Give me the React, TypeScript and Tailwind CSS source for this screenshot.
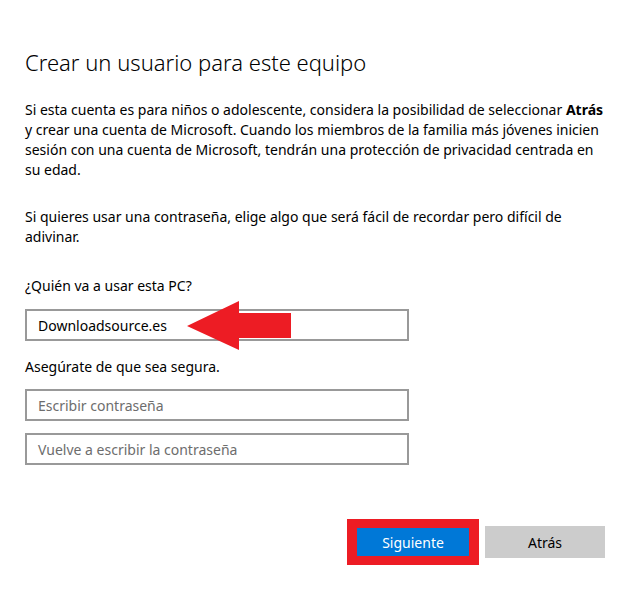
import React from "react";

const Arrow = () => (
  <svg
    className="absolute left-[162px] top-[-8px]"
    width="104"
    height="49"
    viewBox="0 0 104 49"
  >
    <polygon
      points="0,25 52,0 52,12 104,12 104,37 52,37 52,49"
      fill="#ed1c24"
    />
  </svg>
);

export default function App() {
  return (
    <div className="w-[632px] h-[589px] bg-white text-black font-['Noto_Sans',sans-serif] px-[25px] pt-[46px]">
      <h1 className="text-[22px] leading-[32px] font-light">
        Crear un usuario para este equipo
      </h1>

      <p className="mt-[22px] text-[14px] leading-[20px] whitespace-nowrap">
        Si esta cuenta es para niños o adolescente, considera la posibilidad de
        seleccionar <b>Atrás</b>
        <br />y crear una cuenta de Microsoft. Cuando los miembros de la familia
        más jóvenes inicien
        <br />
        sesión con una cuenta de Microsoft, tendrán una protección de privacidad
        centrada en
        <br />
        su edad.
      </p>

      <p className="mt-[27px] text-[14px] leading-[20px] whitespace-nowrap">
        Si quieres usar una contraseña, elige algo que será fácil de recordar
        pero difícil de
        <br />
        adivinar.
      </p>

      <label className="block mt-[29px] text-[14px] leading-[20px]">
        ¿Quién va a usar esta PC?
      </label>
      <div className="relative mt-[13px] w-[384px]">
        <div className="h-[32px] border-2 border-[#999999] px-[11px] flex items-center text-[14px]">
          Downloadsource.es
        </div>
        <Arrow />
      </div>

      <label className="block mt-[16px] text-[14px] leading-[20px]">
        Asegúrate de que sea segura.
      </label>
      <div className="mt-[12px] w-[384px] h-[32px] border-2 border-[#999999] px-[11px] flex items-center text-[14px] text-[#6d6d6d]">
        Escribir contraseña
      </div>
      <div className="mt-[12px] w-[384px] h-[32px] border-2 border-[#999999] px-[11px] flex items-center text-[14px] text-[#6d6d6d]">
        Vuelve a escribir la contraseña
      </div>

      <div className="mt-[54px] flex justify-end items-center gap-[6px] pr-[2px]">
        <div className="border-x-[10px] border-y-[9px] border-[#ed1c24]">
          <button className="w-[112px] h-[28px] bg-[#0078d7] text-white text-[14px] flex items-center justify-center">
            Siguiente
          </button>
        </div>
        <button className="w-[120px] h-[32px] bg-[#cccccc] text-black text-[14px] flex items-center justify-center">
          Atrás
        </button>
      </div>
    </div>
  );
}
